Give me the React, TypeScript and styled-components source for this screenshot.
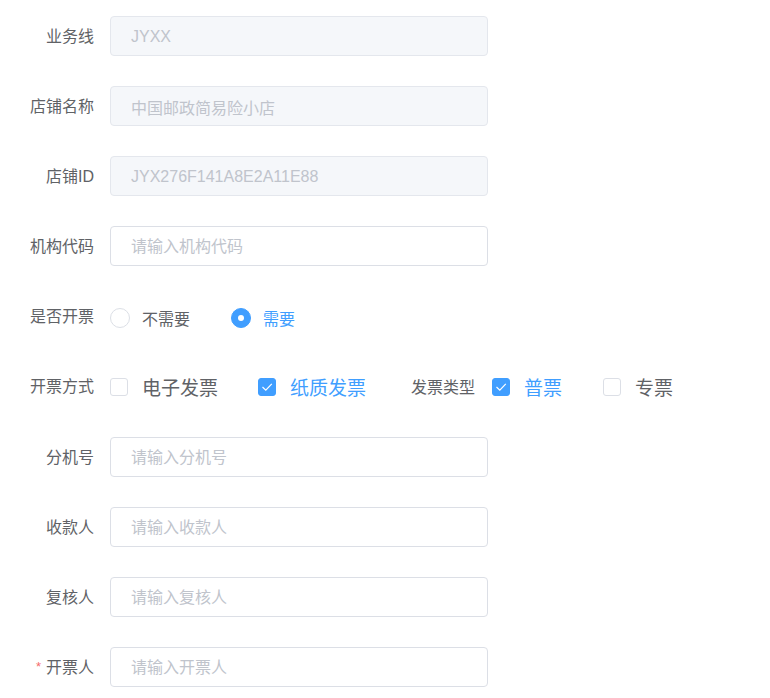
import React, { useState } from "react";
import styled, { createGlobalStyle } from "styled-components";

const GlobalStyle = createGlobalStyle`
  body {
    margin: 0;
    background: #ffffff;
    font-family: "Liberation Sans", "Noto Sans CJK SC", sans-serif;
  }
`;

const Form = styled.div`
  padding: 16px 0 0 0;
  display: flex;
  flex-direction: column;
  gap: 30px;
`;

const Row = styled.div<{ $tall?: boolean }>`
  display: flex;
  align-items: center;
  height: ${(p) => (p.$tall ? "41px" : "40px")};
`;

const Label = styled.label<{ $required?: boolean }>`
  width: 110px;
  flex-shrink: 0;
  box-sizing: border-box;
  padding-right: 16px;
  padding-bottom: 3px;
  text-align: right;
  font-size: 16px;
  color: #606266;
  white-space: nowrap;

  &::before {
    content: ${(p) => (p.$required ? '"*"' : "none")};
    color: #f56c6c;
    font-size: 13px;
    margin-right: 5px;
    vertical-align: 2px;
  }
`;

const Input = styled.input`
  width: 378px;
  height: 40px;
  box-sizing: border-box;
  padding: 2px 20px 0;
  border: 1px solid #dcdfe6;
  border-radius: 4px;
  font-family: inherit;
  font-size: 16px;
  color: #606266;
  outline: none;
  background: #fff;

  &::placeholder {
    color: #c0c4cc;
  }

  &:disabled {
    background: #f5f7fa;
    border-color: #e4e7ed;
    color: #c0c4cc;
  }
`;

const Radio = styled.label<{ $checked: boolean }>`
  display: flex;
  align-items: center;
  margin-right: 41px;
  margin-top: 4px;
  cursor: pointer;
  font-size: 16px;
  color: ${(p) => (p.$checked ? "#409eff" : "#606266")};
`;

const RadioDot = styled.span<{ $checked: boolean }>`
  width: 20px;
  height: 20px;
  box-sizing: border-box;
  border-radius: 50%;
  border: 1px solid ${(p) => (p.$checked ? "#409eff" : "#dcdfe6")};
  background: ${(p) => (p.$checked ? "#409eff" : "#fff")};
  margin-right: 12px;
  display: flex;
  align-items: center;
  justify-content: center;

  &::after {
    content: "";
    width: 6px;
    height: 6px;
    border-radius: 50%;
    background: #fff;
    display: ${(p) => (p.$checked ? "block" : "none")};
  }
`;

const Check = styled.label<{ $checked: boolean; $gap?: number }>`
  display: flex;
  align-items: center;
  margin-right: ${(p) => p.$gap ?? 40}px;
  cursor: pointer;
  font-size: 19px;
  color: ${(p) => (p.$checked ? "#409eff" : "#606266")};
`;

const Box = styled.span<{ $checked: boolean }>`
  width: 18px;
  height: 18px;
  box-sizing: border-box;
  border-radius: 3px;
  border: 1px solid ${(p) => (p.$checked ? "#409eff" : "#dcdfe6")};
  background: ${(p) => (p.$checked ? "#409eff" : "#fff")};
  margin-right: 14px;
  display: flex;
  align-items: center;
  justify-content: center;
`;

const InlineLabel = styled.span`
  font-size: 16px;
  color: #606266;
  margin-right: 17px;
  padding-bottom: 2px;
`;

const Tick = () => (
  <svg width="14" height="12" viewBox="0 0 14 12">
    <path d="M2.5 6 L5.8 9.2 L11.8 2.8" fill="none" stroke="#fff" strokeWidth="1.2" />
  </svg>
);

export default function App() {
  const [invoice, setInvoice] = useState(true);
  const [modes, setModes] = useState({ e: false, paper: true });
  const [types, setTypes] = useState({ normal: true, special: false });

  return (
    <>
      <GlobalStyle />
      <Form>
        <Row>
          <Label>业务线</Label>
          <Input disabled value="JYXX" readOnly />
        </Row>
        <Row>
          <Label>店铺名称</Label>
          <Input disabled value="中国邮政简易险小店" readOnly />
        </Row>
        <Row>
          <Label>店铺ID</Label>
          <Input disabled value="JYX276F141A8E2A11E88" readOnly />
        </Row>
        <Row>
          <Label>机构代码</Label>
          <Input placeholder="请输入机构代码" />
        </Row>
        <Row>
          <Label>是否开票</Label>
          <Radio $checked={!invoice} onClick={() => setInvoice(false)}>
            <RadioDot $checked={!invoice} />
            不需要
          </Radio>
          <Radio $checked={invoice} onClick={() => setInvoice(true)}>
            <RadioDot $checked={invoice} />
            需要
          </Radio>
        </Row>
        <Row $tall>
          <Label>开票方式</Label>
          <Check $checked={modes.e} onClick={() => setModes({ ...modes, e: !modes.e })}>
            <Box $checked={modes.e}>{modes.e && <Tick />}</Box>
            电子发票
          </Check>
          <Check
            $checked={modes.paper}
            $gap={45}
            onClick={() => setModes({ ...modes, paper: !modes.paper })}
          >
            <Box $checked={modes.paper}>{modes.paper && <Tick />}</Box>
            纸质发票
          </Check>
          <InlineLabel>发票类型</InlineLabel>
          <Check
            $checked={types.normal}
            $gap={41}
            onClick={() => setTypes({ ...types, normal: !types.normal })}
          >
            <Box $checked={types.normal}>{types.normal && <Tick />}</Box>
            普票
          </Check>
          <Check
            $checked={types.special}
            onClick={() => setTypes({ ...types, special: !types.special })}
          >
            <Box $checked={types.special}>{types.special && <Tick />}</Box>
            专票
          </Check>
        </Row>
        <Row>
          <Label>分机号</Label>
          <Input placeholder="请输入分机号" />
        </Row>
        <Row>
          <Label>收款人</Label>
          <Input placeholder="请输入收款人" />
        </Row>
        <Row>
          <Label>复核人</Label>
          <Input placeholder="请输入复核人" />
        </Row>
        <Row>
          <Label $required>开票人</Label>
          <Input placeholder="请输入开票人" />
        </Row>
      </Form>
    </>
  );
}
